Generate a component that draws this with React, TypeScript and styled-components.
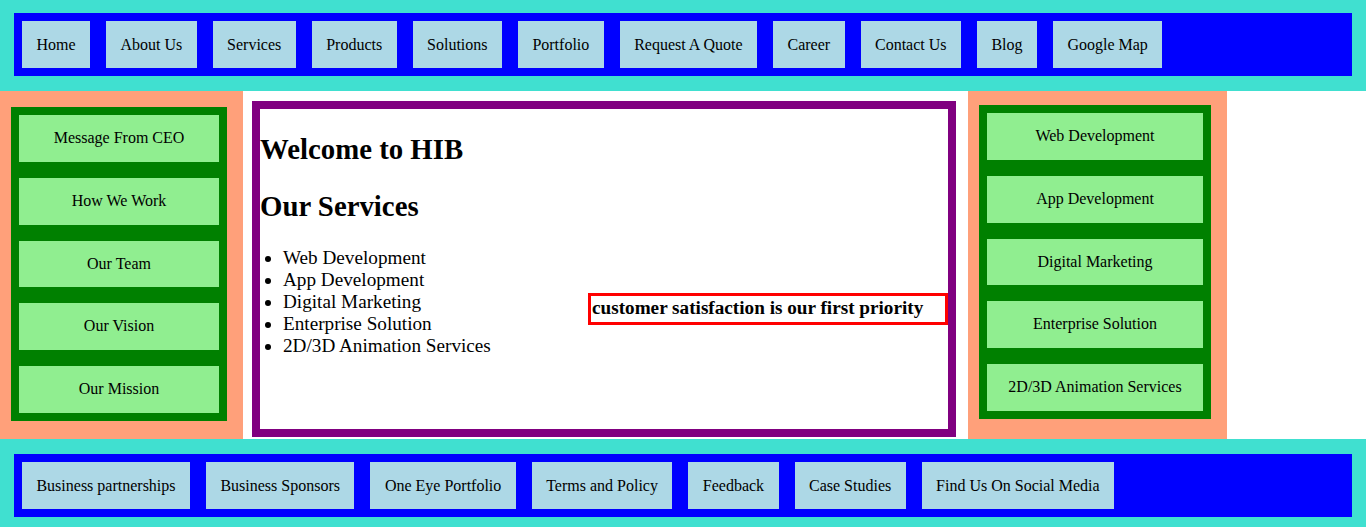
import React from "react";
import styled, { createGlobalStyle } from "styled-components";

const Global = createGlobalStyle`
  html, body { margin: 0; padding: 0; background: #ffffff; }
  body { font-family: "Liberation Serif", "Times New Roman", serif; font-size: 16px; color: #000; }
`;

const Page = styled.div`
  width: 1366px;
`;

const Band = styled.div<{ $pt: number; $pb: number }>`
  background: #40e0d0;
  padding: ${(p) => p.$pt}px 14px ${(p) => p.$pb}px 14px;
`;

const NavBar = styled.ul`
  list-style: none;
  margin: 0;
  padding: 0;
  background: #0000ff;
  display: flex;
  flex-wrap: wrap;
`;

const NavItem = styled.li`
  margin: 8px;
  background: #add8e6;
  padding: 15px 14.44px;
  line-height: 17px;
  white-space: nowrap;
`;

const Middle = styled.div`
  display: flex;
  align-items: stretch;
`;

const Side = styled.aside<{ $w: number; $pt: number }>`
  width: ${(p) => p.$w}px;
  box-sizing: border-box;
  background: #ffa07a;
  padding: ${(p) => p.$pt}px 16px 0 11px;
`;

const SideList = styled.ul`
  list-style: none;
  margin: 0;
  padding: 8px;
  background: #008000;
  display: flex;
  flex-direction: column;
  gap: 16px;
`;

const SideItem = styled.li`
  background: #90ee90;
  text-align: center;
  padding: 14px 0;
  line-height: 18.75px;
  white-space: nowrap;
`;

const Content = styled.main`
  width: 704px;
  height: 336px;
  box-sizing: border-box;
  margin: 10px 12px 2px 9px;
  border: 8px solid #800080;
  font-size: 19.2px;
  display: grid;
  grid-template-columns: 328px 360px;
  align-items: start;
`;

const TextCol = styled.div``;

const Heading = styled.h2`
  font-size: 28.8px;
  font-weight: bold;
  margin: 24px 0;
  line-height: normal;
`;

const ServiceList = styled.ul`
  margin: 19.2px 0;
  padding-left: 23px;
  list-style: disc;
  li { line-height: normal; }
`;

const Priority = styled.div`
  margin-top: 184px;
  border: 3px solid #ff0000;
  padding: 1px 0 3px 1px;
  font-weight: bold;
  line-height: 22px;
  white-space: nowrap;
`;

const topNav = [
  "Home",
  "About Us",
  "Services",
  "Products",
  "Solutions",
  "Portfolio",
  "Request A Quote",
  "Career",
  "Contact Us",
  "Blog",
  "Google Map",
];

const leftNav = ["Message From CEO", "How We Work", "Our Team", "Our Vision", "Our Mission"];

const services = [
  "Web Development",
  "App Development",
  "Digital Marketing",
  "Enterprise Solution",
  "2D/3D Animation Services",
];

const footNav = [
  "Business partnerships",
  "Business Sponsors",
  "One Eye Portfolio",
  "Terms and Policy",
  "Feedback",
  "Case Studies",
  "Find Us On Social Media",
];

export default function App() {
  return (
    <Page>
      <Global />
      <Band $pt={13} $pb={15}>
        <NavBar>
          {topNav.map((t) => (
            <NavItem key={t}>{t}</NavItem>
          ))}
        </NavBar>
      </Band>
      <Middle>
        <Side $w={243} $pt={16}>
          <SideList>
            {leftNav.map((t) => (
              <SideItem key={t}>{t}</SideItem>
            ))}
          </SideList>
        </Side>
        <Content>
          <TextCol>
            <Heading>Welcome to HIB</Heading>
            <Heading>Our Services</Heading>
            <ServiceList>
              {services.map((s) => (
                <li key={s}>{s}</li>
              ))}
            </ServiceList>
          </TextCol>
          <Priority>customer satisfaction is our first priority</Priority>
        </Content>
        <Side $w={259} $pt={14}>
          <SideList>
            {services.map((t) => (
              <SideItem key={t}>{t}</SideItem>
            ))}
          </SideList>
        </Side>
      </Middle>
      <Band $pt={15} $pb={15}>
        <NavBar>
          {footNav.map((t) => (
            <NavItem key={t}>{t}</NavItem>
          ))}
        </NavBar>
      </Band>
    </Page>
  );
}
